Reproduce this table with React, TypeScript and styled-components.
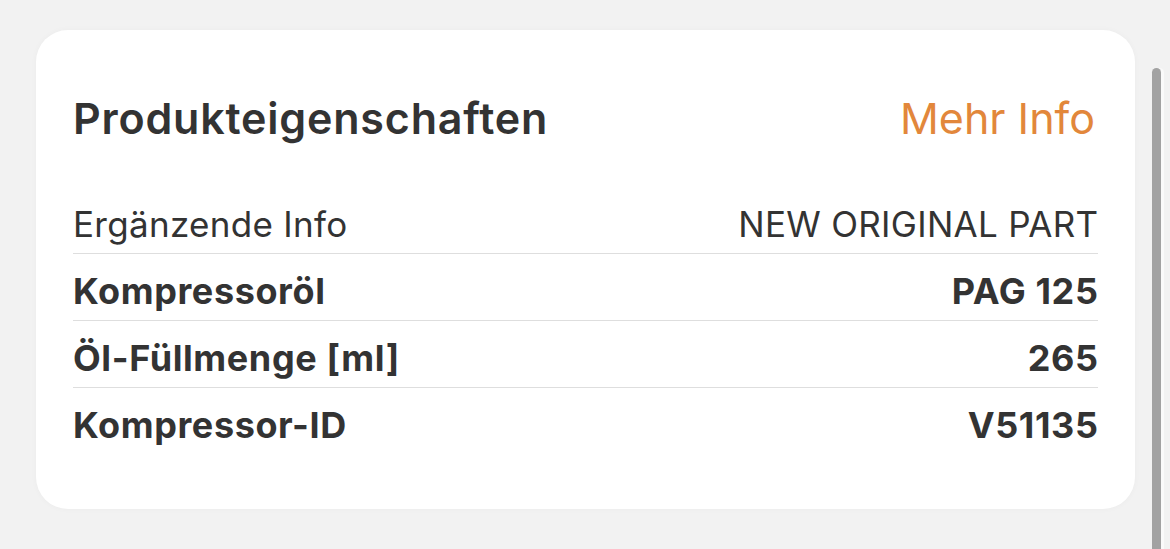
import React from "react";
import styled, { createGlobalStyle } from "styled-components";

const GlobalStyle = createGlobalStyle`
  html, body {
    margin: 0;
    padding: 0;
    background: #f2f2f2;
    font-family: Inter, Roboto, "Liberation Sans", sans-serif;
    color: #333333;
  }
`;

const Page = styled.div`
  position: relative;
  min-height: 549px;
  padding: 30px 0 0 36px;
  box-sizing: border-box;
`;

const Card = styled.section`
  width: 1099px;
  height: 479px;
  box-sizing: border-box;
  background: #ffffff;
  border-radius: 32px;
  padding: 63px 37px 0 37px;
  box-shadow: 0 0 6px rgba(0, 0, 0, 0.03);
`;

const Header = styled.div`
  display: flex;
  justify-content: space-between;
  align-items: center;
  margin-bottom: 44px;
`;

const Title = styled.h2`
  margin: 0;
  font-size: 43px;
  line-height: 50px;
  font-weight: 600;
  letter-spacing: 0.8px;
  color: #333333;
`;

const MoreLink = styled.a`
  font-size: 43px;
  line-height: 50px;
  font-weight: 400;
  color: #e2873b;
  text-decoration: none;
  margin-right: 3px;
`;

const List = styled.div`
  display: flex;
  flex-direction: column;
`;

const Row = styled.div<{ $bold?: boolean }>`
  display: flex;
  justify-content: space-between;
  align-items: center;
  padding: 16px 0 8px 0;
  border-bottom: 1px solid #dedede;
  font-size: ${(p) => (p.$bold ? "36px" : "35px")};
  letter-spacing: ${(p) => (p.$bold ? "0.6px" : "0.3px")};
  line-height: 42px;
  font-weight: ${(p) => (p.$bold ? 700 : 400)};
  color: #333333;

  &:last-child {
    border-bottom: none;
  }
`;

const Label = styled.span``;
const Value = styled.span`
  text-align: right;
  margin-right: -0.5px;
`;

const ScrollThumb = styled.div`
  position: absolute;
  top: 68px;
  left: 1152px;
  width: 9px;
  bottom: 0;
  background: #a2a2a2;
  border-radius: 5px 5px 0 0;
  box-shadow: 3px 0 0 #fafafa;
`;

const rows = [
  { label: "Ergänzende Info", value: "NEW ORIGINAL PART", bold: false },
  { label: "Kompressoröl", value: "PAG 125", bold: true },
  { label: "Öl-Füllmenge [ml]", value: "265", bold: true },
  { label: "Kompressor-ID", value: "V51135", bold: true },
];

export default function App() {
  return (
    <>
      <GlobalStyle />
      <Page>
        <Card>
          <Header>
            <Title>Produkteigenschaften</Title>
            <MoreLink href="#">Mehr Info</MoreLink>
          </Header>
          <List>
            {rows.map((r) => (
              <Row key={r.label} $bold={r.bold}>
                <Label>{r.label}</Label>
                <Value>{r.value}</Value>
              </Row>
            ))}
          </List>
        </Card>
        <ScrollThumb />
      </Page>
    </>
  );
}
